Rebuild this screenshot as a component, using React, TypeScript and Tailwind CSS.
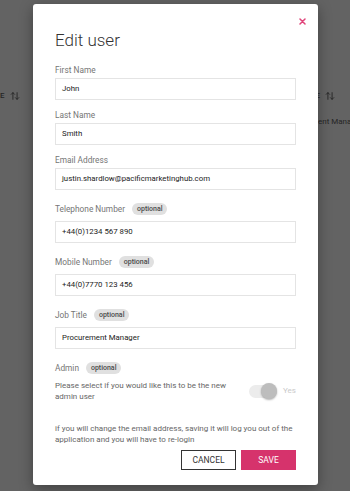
import React from "react";
import { ArrowUpDown } from "lucide-react";

const font = { fontFamily: "Roboto, 'Noto Sans', sans-serif" };

function Badge() {
  return (
    <span className="ml-[7px] inline-flex h-[12px] items-center rounded-full bg-[#e0e0e0] px-[5px] text-[7px] font-medium leading-none text-[#4a4a4a]">
      optional
    </span>
  );
}

function Field({ label, value, optional }: { label: string; value: string; optional?: boolean }) {
  return (
    <div className="mt-[9px]">
      <div className={`mb-[2px] flex items-center ${optional ? "h-[20px]" : "h-[12px]"}`}>
        <span className="text-[8.3px] leading-none text-[#757575]">{label}</span>
        {optional && <Badge />}
      </div>
      <div className="flex h-[22px] items-center border border-[#e4e4e4] px-[6px] text-[7.8px] text-[#222]">
        {value}
      </div>
    </div>
  );
}

export default function App() {
  return (
    <div className="relative h-[491px] w-[350px] overflow-hidden bg-[#636363]" style={font}>
      <div className="flex items-center pt-[90px] text-[8px] font-medium text-[#262626]">
        <span>E</span>
        <ArrowUpDown className="ml-[5px] h-[10px] w-[10px] shrink-0" strokeWidth={2.2} color="#262626" />
        <span className="ml-[296px]">E</span>
        <ArrowUpDown className="ml-[5px] h-[10px] w-[10px] shrink-0" strokeWidth={2.2} color="#262626" />
      </div>
      <div className="mt-[14px] ml-[318px] whitespace-nowrap text-[8px] text-[#262626]">ent Mana</div>

      <div className="absolute left-[33px] top-[4px] h-[481px] w-[285px] rounded-[3px] bg-white px-[22px] pt-[25px] shadow-[0_4px_14px_rgba(0,0,0,0.35)]">
        <button className="absolute right-[12px] top-[13px] flex h-[8px] w-[8px] items-center justify-center">
          <svg width="7" height="7" viewBox="0 0 7 7">
            <path d="M1 1L6 6M6 1L1 6" stroke="#e0447a" strokeWidth="1.5" strokeLinecap="round" />
          </svg>
        </button>
        <div className="text-[17px] font-light leading-[22px] text-[#333]">Edit user</div>
        <div className="mt-[13px]">
          <Field label="First Name" value="John" />
          <Field label="Last Name" value="Smith" />
          <Field label="Email Address" value="justin.shardlow@pacificmarketinghub.com" />
          <Field label="Telephone Number" value="+44(0)1234 567 890" optional />
          <Field label="Mobile Number" value="+44(0)7770 123 456" optional />
          <Field label="Job Title" value="Procurement Manager" optional />
          <div className="mt-[9px] flex h-[20px] items-center">
            <span className="text-[8.3px] leading-none text-[#757575]">Admin</span>
            <Badge />
          </div>
          <div className="mt-[2px] flex items-center justify-between">
            <p className="w-[185px] text-[8px] leading-[11px] text-[#666]">
              Please select if you would like this to be the new admin user
            </p>
            <div className="flex w-[47px] items-center">
              <div className="relative h-[13px] w-[28px] rounded-full bg-[#ececec]">
                <div className="absolute right-0 top-[-1.5px] h-[16px] w-[16px] rounded-full bg-[#bdbdbd] shadow-[0_1px_2px_rgba(0,0,0,0.3)]" />
              </div>
              <span className="ml-[6px] text-[8px] leading-none text-[#cacaca]">Yes</span>
            </div>
          </div>
          <p className="mt-[21px] text-[8px] leading-[11px] text-[#666]">
            if you will change the email address, saving it will log you out of the application and you will have to re-login
          </p>
          <div className="mt-[5px] flex justify-end gap-[5px]">
            <button className="flex h-[20px] w-[55px] items-center justify-center border-[1.5px] border-[#333] text-[8.5px] text-[#333]">
              CANCEL
            </button>
            <button className="flex h-[20px] w-[55px] items-center justify-center bg-[#d6336c] text-[8.5px] text-white">
              SAVE
            </button>
          </div>
        </div>
      </div>
    </div>
  );
}
